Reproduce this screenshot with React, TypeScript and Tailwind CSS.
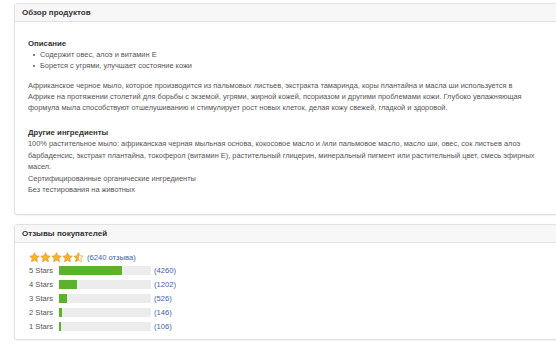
import React from 'react';

const Star: React.FC<{ fill: 'full' | 'half' }> = ({ fill }) => {
  const d = 'M6 0.8l1.55 3.3 3.6 0.45-2.65 2.5 0.7 3.55L6 8.85 2.8 10.6l0.7-3.55L0.85 4.55l3.6-0.45z';
  return (
    <svg width="11" height="11" viewBox="0 0 12 12" className="shrink-0">
      <defs>
        <linearGradient id={`h-${fill}`} x1="0" x2="1" y1="0" y2="0">
          <stop offset={fill === 'full' ? '1' : '0.5'} stopColor="#f7b52b" />
          <stop offset={fill === 'full' ? '1' : '0.5'} stopColor="#ffffff" />
        </linearGradient>
      </defs>
      <path d={d} fill={`url(#h-${fill})`} stroke="#d9901a" strokeWidth="0.7" strokeLinejoin="round" />
    </svg>
  );
};

const Panel: React.FC<{ title: string; className?: string; children: React.ReactNode }> = ({ title, className, children }) => (
  <div className={`ml-[14px] w-[560px] rounded-[3px] border border-[#e2e2e2] bg-white shadow-[0_1px_2px_rgba(0,0,0,0.06)] ${className ?? ''}`}>
    <div className="flex h-[18px] items-center border-b border-[#e2e2e2] bg-[#f7f7f7] px-[7px] text-[8px] font-bold text-[#333]">
      {title}
    </div>
    {children}
  </div>
);

const App: React.FC = () => {
  const ratings = [
    { label: '5 Stars', width: 63, count: 4260 },
    { label: '4 Stars', width: 18, count: 1202 },
    { label: '3 Stars', width: 8, count: 526 },
    { label: '2 Stars', width: 3, count: 146 },
    { label: '1 Stars', width: 2, count: 106 },
  ];

  return (
    <div className="h-[346px] w-[556px] overflow-hidden bg-white pt-[3px] font-['Liberation_Sans',Arial,sans-serif] text-[7.4px] leading-[11px] text-[#555]">
      <Panel title="Обзор продуктов" className="h-[212px]">
        <div className="px-[13px] pt-[16px]">
          <div className="text-[7.8px] font-bold text-[#333]">Описание</div>
          <ul className="pl-[5px]">
            <li className="flex items-center gap-[5px]"><span className="h-[2px] w-[2px] rounded-full bg-[#555]" />Содержит овес, алоэ и витамин Е</li>
            <li className="flex items-center gap-[5px]"><span className="h-[2px] w-[2px] rounded-full bg-[#555]" />Борется с угрями, улучшает состояние кожи</li>
          </ul>
          <p className="mt-[9px] w-[494px]">
            Африканское черное мыло, которое производится из пальмовых листьев, экстракта тамаринда, коры плантайна и масла ши используется в Африке на протяжении столетий для борьбы с экземой, угрями, жирной кожей, псориазом и другими проблемами кожи. Глубоко увлажняющая формула мыла способствуют отшелушиванию и стимулирует рост новых клеток, делая кожу свежей, гладкой и здоровой.
          </p>
          <div className="mt-[14px] text-[7.8px] font-bold text-[#333]">Другие ингредиенты</div>
          <div className="leading-[11.5px]">
            <p className="w-[520px]">
              100% растительное мыло: африканская черная мыльная основа, кокосовое масло и /или пальмовое масло, масло ши, овес, сок листьев алоэ барбаденсис, экстракт плантайна, токоферол (витамин Е), растительный глицерин, минеральный пигмент или растительный цвет, смесь эфирных масел.
            </p>
            <p>Сертифицированные органические ингредиенты</p>
            <p>Без тестирования на животных</p>
          </div>
        </div>
      </Panel>

      <Panel title="Отзывы покупателей" className="mt-[9px] h-[116px]">
        <div className="px-[14px] pt-[9px] text-[7.6px]">
          <div className="flex items-center gap-[2px]">
            <div className="flex">
              <Star fill="full" />
              <Star fill="full" />
              <Star fill="full" />
              <Star fill="full" />
              <Star fill="half" />
            </div>
            <span className="ml-[1px] text-[#3b5fb0]">(6240 отзыва)</span>
          </div>
          <div className="mt-[3px] flex flex-col gap-[5px]">
            {ratings.map((r) => (
              <div key={r.label} className="flex h-[9px] items-center">
                <span className="w-[30px]">{r.label}</span>
                <div className="h-[9px] w-[92px] bg-[#ececec]">
                  <div className="h-full bg-[#5eb12c]" style={{ width: r.width }} />
                </div>
                <span className="ml-[3px] text-[#3b5fb0]">({r.count})</span>
              </div>
            ))}
          </div>
        </div>
      </Panel>
    </div>
  );
};

export default App;
